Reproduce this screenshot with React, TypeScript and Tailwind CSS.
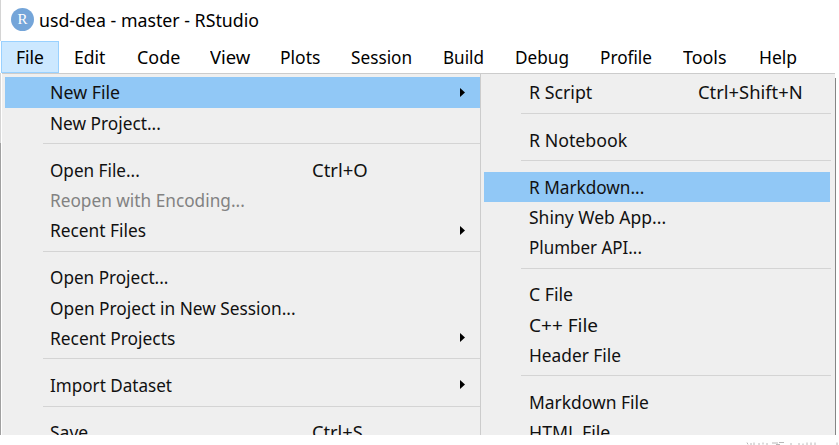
import { useLayoutEffect, useRef, useState } from "react";

type Entry =
  | { kind: "sep" }
  | { kind: "row"; label: string; width: number; shortcut?: string; shortcutWidth?: number; arrow?: boolean; active?: boolean; disabled?: boolean };

const sep: Entry = { kind: "sep" };

const bar = [
  { label: "File", width: 28 },
  { label: "Edit", width: 31 },
  { label: "Code", width: 43 },
  { label: "View", width: 40 },
  { label: "Plots", width: 40 },
  { label: "Session", width: 61 },
  { label: "Build", width: 41 },
  { label: "Debug", width: 54 },
  { label: "Profile", width: 52 },
  { label: "Tools", width: 44 },
  { label: "Help", width: 38 },
];

const fileMenu: Entry[] = [
  { kind: "row", label: "New File", width: 70, arrow: true, active: true },
  { kind: "row", label: "New Project...", width: 110.5 },
  sep,
  { kind: "row", label: "Open File...", width: 90, shortcut: "Ctrl+O", shortcutWidth: 56 },
  { kind: "row", label: "Reopen with Encoding...", width: 195, disabled: true },
  { kind: "row", label: "Recent Files", width: 96, arrow: true },
  sep,
  { kind: "row", label: "Open Project...", width: 118.5 },
  { kind: "row", label: "Open Project in New Session...", width: 246 },
  { kind: "row", label: "Recent Projects", width: 125, arrow: true },
  sep,
  { kind: "row", label: "Import Dataset", width: 122, arrow: true },
  sep,
  { kind: "row", label: "Save", width: 38, shortcut: "Ctrl+S", shortcutWidth: 51 },
];

const newMenu: Entry[] = [
  { kind: "row", label: "R Script", width: 63, shortcut: "Ctrl+Shift+N", shortcutWidth: 105 },
  sep,
  { kind: "row", label: "R Notebook", width: 98.5 },
  sep,
  { kind: "row", label: "R Markdown...", width: 115, active: true },
  { kind: "row", label: "Shiny Web App...", width: 137 },
  { kind: "row", label: "Plumber API...", width: 112.5 },
  sep,
  { kind: "row", label: "C File", width: 44.5 },
  { kind: "row", label: "C++ File", width: 69.5 },
  { kind: "row", label: "Header File", width: 92 },
  sep,
  { kind: "row", label: "Markdown File", width: 119.5 },
  { kind: "row", label: "HTML File", width: 81 },
];

/** A label stretched or condensed to its column's text width. */
function Label({ text, width }: { text: string; width: number }) {
  const ref = useRef<HTMLSpanElement>(null);
  const [scale, setScale] = useState(1);
  useLayoutEffect(() => {
    if (ref.current) setScale(width / ref.current.offsetWidth);
  }, [width]);
  return (
    <span ref={ref} className="inline-block origin-left whitespace-pre" style={{ transform: `scaleX(${scale})` }}>
      {text}
    </span>
  );
}

function Menu({ entries, sub }: { entries: Entry[]; sub?: boolean }) {
  return (
    <>
      {entries.map((e, i) =>
        e.kind === "sep" ? (
          <div key={i} className={`h-[17px] shrink-0 pt-[5.5px] ${sub ? "pl-[37px]" : "pl-[38px]"}`}>
            <div className="h-px bg-[#d4d4d4]" />
          </div>
        ) : (
          <div
            key={i}
            className={`flex h-[30.2px] shrink-0 items-center pl-[45px] ${sub ? "mr-px" : ""} ${
              e.active ? "bg-[#91c8f6]" : ""
            } ${e.disabled ? "text-[#828282]" : ""}`}
          >
            <div className={`shrink-0 ${sub ? "w-[169px]" : "w-[262px]"}`}>
              <Label text={e.label} width={e.width} />
            </div>
            <div className={`shrink-0 ${sub ? "w-[110px]" : "w-[148px]"}`}>
              {e.shortcut && <Label text={e.shortcut} width={e.shortcutWidth ?? 50} />}
            </div>
            {e.arrow && (
              <svg className="h-[9px] w-[5px]" viewBox="0 0 5 9">
                <path d="M0 0L5 4.5L0 9Z" fill="#000" />
              </svg>
            )}
          </div>
        ),
      )}
    </>
  );
}

export default function App() {
  return (
    <div className="flex h-[445px] w-[839px] flex-col overflow-hidden bg-white font-['Noto_Sans',sans-serif] text-[17.5px] leading-[24px] text-[#111]">
      <header className="flex h-[41px] shrink-0 items-center border-l border-[#d4d4d4] pb-[2px] pl-[10px]">
        <div className="flex size-[23px] items-center justify-center rounded-full bg-[#74a5d9] font-['Liberation_Serif',serif] text-[15px] leading-none text-white">
          R
        </div>
        <div className="ml-[5px] text-black">
          <Label text="usd-dea - master - RStudio" width={220} />
        </div>
      </header>
      <nav className="grid h-[32px] shrink-0 grid-cols-[58px_63px_73px_70px_71px_92px_72px_85px_83px_76px_1fr] pl-px text-black">
        {bar.map((b, i) => (
          <div
            key={b.label}
            className={`flex items-center ${i === 0 ? "border border-[#99d1ff] bg-[#cce8ff] pl-[14px]" : "pl-[15px]"}`}
          >
            <Label text={b.label} width={b.width} />
          </div>
        ))}
      </nav>
      <main className="flex h-[362px] shrink-0 overflow-hidden">
        <div className="flex w-[2px] shrink-0 flex-col">
          <div className="h-[70px] w-px bg-[#d4d4d4]" />
          <div className="w-px grow bg-[#a0a0a0]" />
        </div>
        <section className="flex w-[478px] shrink-0 flex-col border-t border-[#cccccc] bg-[#efefef] pt-[3.4px] pl-[3px]">
          <Menu entries={fileMenu} />
        </section>
        <section className="flex w-[355px] shrink-0 flex-col border-t border-l border-[#cccccc] bg-[#efefef] pt-[3.4px] pr-[4px] pl-[3px]">
          <Menu entries={newMenu} sub />
        </section>
        <div className="mt-[5px] w-px bg-[#858585]" />
      </main>
      <footer className="flex h-[10px] shrink-0 items-end justify-end bg-white">
        <svg className="h-[3px] w-[94px]" viewBox="0 0 94 3" stroke="#b8b8b8" strokeWidth="1" fill="none">
          <path d="M2 0.5l1 2M6 1v2M9 0.5v2.500M14 1v2M18 0.500v2M22 1v2M27 1h6M34 0.500h5M31 2.500h4M46 1v2M54 1v2M58 1.500v1.500M62 0.500v2.500M66 0.500v2.500M70 0.500v2.500M92 0.500v2.500" />
        </svg>
      </footer>
    </div>
  );
}
